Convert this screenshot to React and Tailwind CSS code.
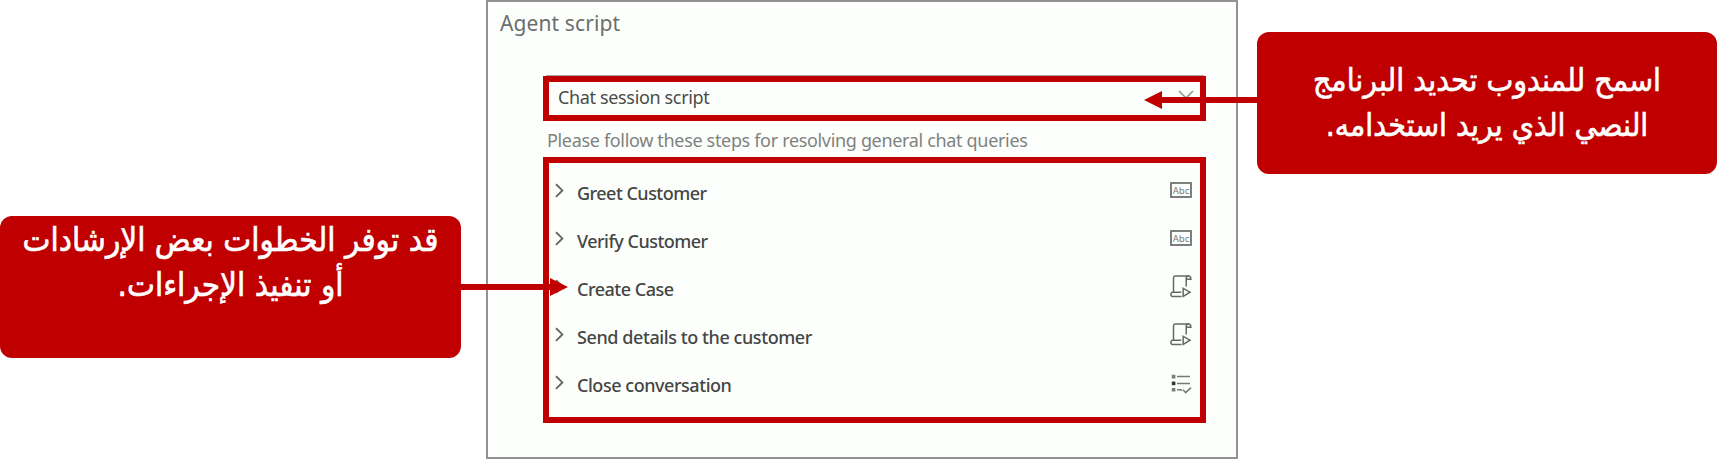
const steps = [
  { label: 'Greet Customer', icon: 'text', spacing: 'tracking-[-0.52px]' },
  { label: 'Verify Customer', icon: 'text', spacing: 'tracking-[-0.52px]' },
  { label: 'Create Case', icon: 'macro', spacing: 'tracking-[-0.5px]' },
  { label: 'Send details to the customer', icon: 'macro', spacing: 'tracking-[-0.42px]' },
  { label: 'Close conversation', icon: 'script', spacing: 'tracking-[-0.46px]' },
];

function TextIcon() {
  return (
    <svg width="22" height="16" viewBox="0 0 22 16" fill="none">
      <rect x="1" y="1" width="20" height="14" stroke="#7d7f7d" strokeWidth="2" />
      <text x="11" y="11.5" textAnchor="middle" fontFamily="Noto Sans, sans-serif" fontSize="9.5" fill="#777977">Abc</text>
    </svg>
  );
}

function MacroIcon() {
  return (
    <svg width="22" height="23" viewBox="0 0 22 23" fill="none" stroke="#666966" strokeWidth="1.5">
      <path d="M3.5 17V3.2C3.5 1.8 4.3 1 5.5 1H18.6" />
      <path d="M18.6 1C17 1 16.2 2 16.2 3.5V11.5M18.6 1C20.2 1 20.9 2.2 20.9 4.2H16.4" />
      <path d="M11.3 17.3H2.7C1.5 17.3 0.9 18.2 0.9 19.3C0.9 20.7 1.6 21.6 2.8 21.6H11.6" />
      <path d="M13.2 13.3L20 17.2L13.2 21.3Z" />
    </svg>
  );
}

function ScriptIcon() {
  return (
    <svg className="mt-[4px]" width="21" height="20" viewBox="0 0 21 20" fill="none" stroke="#777977" strokeWidth="1.6">
      <path d="M6 2.5H19M6 9.5H19M6 15.7H9.5L11 16.5" />
      <path d="M12 15.8L14.7 18.7L20 13.6" />
      <path d="M0.8 0.8H4.4V4.4H0.8ZM0.8 14H4.4V17.6H0.8Z" fill="#7a7c7a" stroke="none" />
      <path d="M0.8 7.6H4.4V11.2H0.8Z" fill="#333" stroke="none" />
    </svg>
  );
}

const icons = { text: TextIcon, macro: MacroIcon, script: ScriptIcon };

function Step({ label, icon, spacing }) {
  const Icon = icons[icon];
  return (
    <li className="flex h-12 items-center pr-[8px] pl-[6px]">
      <svg className="mb-[6px]" width="9" height="15" viewBox="0 0 9 15" fill="none" stroke="#666866" strokeWidth="1.9">
        <path d="M1 1.2L7.4 7.4L1 13.8" />
      </svg>
      <span className={`ml-[13px] grow text-[18px] leading-6 font-medium whitespace-nowrap text-[#444644] ${spacing}`}>{label}</span>
      <span className="mb-[6px] flex w-[22px] justify-center">
        <Icon />
      </span>
    </li>
  );
}

function Callout({ className, children }) {
  return (
    <div
      dir="rtl"
      className={`relative h-[142px] rounded-[12px] bg-[#c00000] text-center font-['DejaVu_Sans_Condensed','DejaVu_Sans',sans-serif] leading-[45px] whitespace-nowrap text-white [-webkit-text-stroke:0.6px_white] ${className}`}
    >
      {children}
    </div>
  );
}

export default function App() {
  return (
    <main className="flex h-[465px] w-[1717px] items-start overflow-hidden bg-white font-['Noto_Sans',sans-serif]">
      <Callout className="mt-[216px] w-[461px] pt-px text-[33px]">
        <p>قد توفر الخطوات بعض الإرشادات</p>
        <p>أو تنفيذ الإجراءات.</p>
        <svg className="absolute top-[62px] left-[461px] z-10" width="107" height="18" viewBox="0 0 107 18" fill="#c00000">
          <path d="M0 6H89V0L107 9L89 18V12H0Z" />
        </svg>
      </Callout>

      <section className="ml-[25px] h-[459px] w-[752px] border-2 border-[#929292] bg-[#fdfffd]">
        <h1 className="mt-[6px] ml-[12px] h-[30px] text-[21px] leading-[30px] tracking-[0.1px] whitespace-nowrap text-[#6c6e6c]">Agent script</h1>
        <div className="mt-[37px] ml-[58px] h-px w-[658px] bg-[#a5a7a5]" />
        <div className="ml-[55px] flex h-[45px] w-[663px] items-center justify-between border-6 border-[#c00000] pr-[6px] pl-[9px]">
          <span className="mb-[3px] text-[18px] leading-6 tracking-[-0.35px] whitespace-nowrap text-[#4a4c4a]">Chat session script</span>
          <svg className="mb-[8px]" width="16" height="9" viewBox="0 0 16 9" fill="none" stroke="#929492" strokeWidth="1.6">
            <path d="M1 1L8 8L15 1" />
          </svg>
        </div>
        <p className="ml-[59px] flex h-[36px] items-center pt-[2px] text-[18px] leading-6 tracking-[-0.33px] whitespace-nowrap text-[#808280]">
          Please follow these steps for resolving general chat queries
        </p>
        <ul className="ml-[55px] h-[266px] w-[663px] border-6 border-[#c00000] pt-[6px]">
          {steps.map((step) => (
            <Step key={step.label} {...step} />
          ))}
        </ul>
      </section>

      <Callout className="mt-[32px] ml-[19px] w-[460px] pt-[26px] text-[31.7px]">
        <p>اسمح للمندوب تحديد البرنامج</p>
        <p>النصي الذي يريد استخدامه.</p>
        <svg className="absolute top-[59px] left-[-113px] z-10" width="113" height="18" viewBox="0 0 113 18" fill="#c00000">
          <path d="M113 6H18V0L0 9L18 18V12H113Z" />
        </svg>
      </Callout>
    </main>
  );
}
